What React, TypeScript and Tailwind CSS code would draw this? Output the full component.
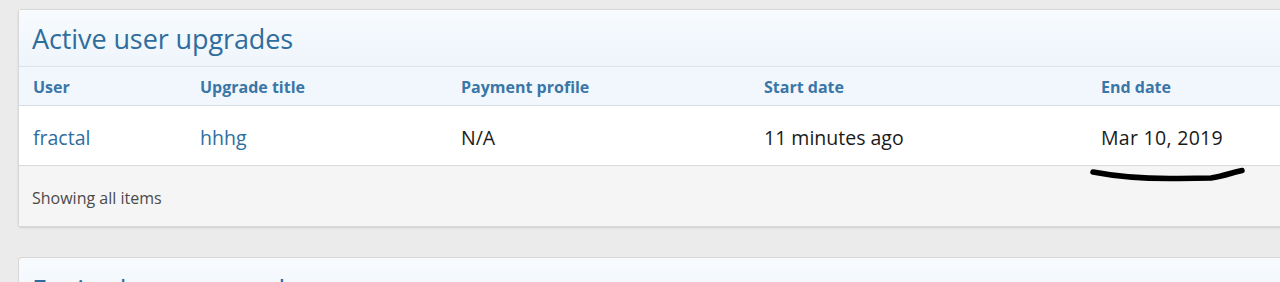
import React from "react";

const cols = ["w-[167px]", "w-[261px]", "w-[303px]", "w-[337px]", "flex-1"];

function HeaderRow() {
  const labels = ["User", "Upgrade title", "Payment profile", "Start date", "End date"];
  return (
    <div className="flex h-[39px] items-center bg-[#f1f7fd] border-b border-[#d6dde5] pt-[2px]">
      {labels.map((l, i) => (
        <div key={l} className={`${cols[i]} pl-[14px] text-[16px] font-bold text-[#3a76a6]`}>
          {l}
        </div>
      ))}
    </div>
  );
}

export default function App() {
  return (
    <div
      className="h-[282px] w-[1280px] overflow-hidden bg-[#ebebeb] pt-[9px] pl-[18px]"
      style={{ fontFamily: '"Open Sans", "Noto Sans", sans-serif' }}
    >
      <div className="relative rounded-tl-[4px] rounded-bl-[4px] border border-r-0 border-[#d8d8d8] bg-white shadow-[0_1px_2px_rgba(0,0,0,0.12)]">
        <div className="flex h-[57px] items-center border-b border-[#dde3ea] bg-gradient-to-b from-[#f8fbfe] to-[#eef5fc] pl-[13px] pt-[3px]">
          <h2 className="text-[27px] font-normal tracking-[-0.1px] text-[#2f6d9e]">Active user upgrades</h2>
        </div>
        <HeaderRow />
        <div className="flex h-[60px] items-center border-b border-[#d9d9d9] bg-white text-[19.5px] pt-[4px]">
          <div className={`${cols[0]} pl-[14px] text-[#2f6d9e]`}>fractal</div>
          <div className={`${cols[1]} pl-[14px] text-[#2f6d9e]`}>hhhg</div>
          <div className={`${cols[2]} pl-[14px] text-[#1a1a1a]`}>N/A</div>
          <div className={`${cols[3]} pl-[14px] text-[#1a1a1a]`}>11 minutes ago</div>
          <div className={`${cols[4]} pl-[14px] text-[#1a1a1a] tracking-[0.3px]`}>Mar 10, 2019</div>
        </div>
        <div className="flex h-[60px] items-center bg-[#f5f5f5] pl-[13px] pt-[3px] text-[16px] text-[#4a4a4a]">
          Showing all items
        </div>
        <svg
          className="absolute left-[1070px] top-[155px]"
          width="160"
          height="20"
          viewBox="0 0 160 20"
        >
          <path
            d="M4 7 C 30 12, 60 14, 90 13.5 L 122 13 C 135 11, 145 7, 153 5.5"
            fill="none"
            stroke="#000"
            strokeWidth="5.5"
            strokeLinecap="round"
          />
        </svg>
      </div>
      <div className="mt-[30px] h-[60px] rounded-tl-[4px] border border-r-0 border-[#d8d8d8] bg-gradient-to-b from-[#f8fbfe] to-[#eef5fc] pl-[13px] pt-[12px]">
        <h2 className="text-[27px] font-normal tracking-[-0.1px] text-[#2f6d9e]">Expired user upgrades</h2>
      </div>
    </div>
  );
}
